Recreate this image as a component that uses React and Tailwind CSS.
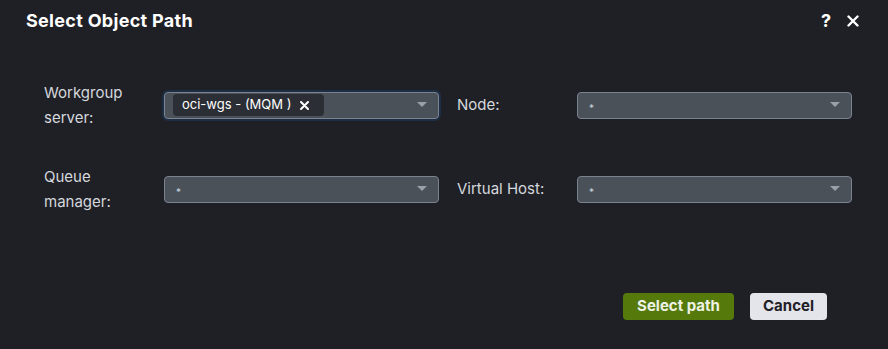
import React from "react";

const font = { fontFamily: "Inter, 'Open Sans', sans-serif" };

function Caret() {
  return (
    <svg width="10" height="6" viewBox="0 0 10 6" className="shrink-0">
      <path d="M0 0 L10 0 L5 5 Z" fill="#9aa0a8" />
    </svg>
  );
}

function Select({ children, focused }) {
  return (
    <div
      className={
        "flex h-[27px] w-[275px] items-center rounded-[4px] border border-[#7b8290] bg-[#4b5159] pl-[8px] pr-[11px] " +
        (focused ? "shadow-[0_0_0_2px_#1d2d44]" : "")
      }
    >
      <div className="flex flex-1 items-center">{children}</div>
      <Caret />
    </div>
  );
}

function Star() {
  return <span className="pl-[3px] pt-[5px] text-[10px] leading-none text-[#c9d4e0]">*</span>;
}

export default function App() {
  return (
    <div className="h-[349px] w-[888px] bg-[#1f2026] text-white" style={font}>
      <div className="flex h-[41px] items-center justify-between pl-[26px] pr-[29px]">
        <div className="text-[18px] font-bold tracking-[0.3px]">Select Object Path</div>
        <div className="flex items-center gap-[16px] text-[18px] font-bold">
          <span>?</span>
          <svg width="12" height="12" viewBox="0 0 12 12">
            <path d="M1.5 1.5 L10.5 10.5 M10.5 1.5 L1.5 10.5" stroke="white" strokeWidth="2.4" strokeLinecap="round" />
          </svg>
        </div>
      </div>

      <div className="grid grid-cols-[120px_293px_120px_275px] pl-[44px] pt-[39px] text-[15px] text-[#d5d8dd]">
        <div className="flex flex-col justify-center leading-[25px]">
          <span>Workgroup</span>
          <span>server:</span>
        </div>
        <div className="flex items-center">
          <Select focused>
            <div className="flex h-[22px] items-center gap-[9px] rounded-[4px] bg-[#2b2e35] pl-[9px] pr-[15px] text-[13px] text-white">
              <span>oci-wgs - (MQM )</span>
              <svg width="9" height="9" viewBox="0 0 9 9">
                <path d="M1 1 L8 8 M8 1 L1 8" stroke="white" strokeWidth="2" strokeLinecap="round" />
              </svg>
            </div>
          </Select>
        </div>
        <div className="flex items-center">Node:</div>
        <div className="flex items-center">
          <Select>
            <Star />
          </Select>
        </div>

        <div className="mt-[34px] flex flex-col justify-center leading-[25px]">
          <span>Queue</span>
          <span>manager:</span>
        </div>
        <div className="mt-[34px] flex items-center">
          <Select>
            <Star />
          </Select>
        </div>
        <div className="mt-[34px] flex items-center">Virtual Host:</div>
        <div className="mt-[34px] flex items-center">
          <Select>
            <Star />
          </Select>
        </div>
      </div>

      <div className="flex justify-end gap-[16px] pr-[61px] pt-[79px]">
        <button className="h-[27px] w-[111px] rounded-[4px] bg-[#557a0b] text-[15px] font-bold text-[#eef2e6]">
          Select path
        </button>
        <button className="h-[27px] w-[77px] rounded-[4px] bg-[#e4e5ea] text-[15px] font-bold text-[#1f2026]">
          Cancel
        </button>
      </div>
    </div>
  );
}
